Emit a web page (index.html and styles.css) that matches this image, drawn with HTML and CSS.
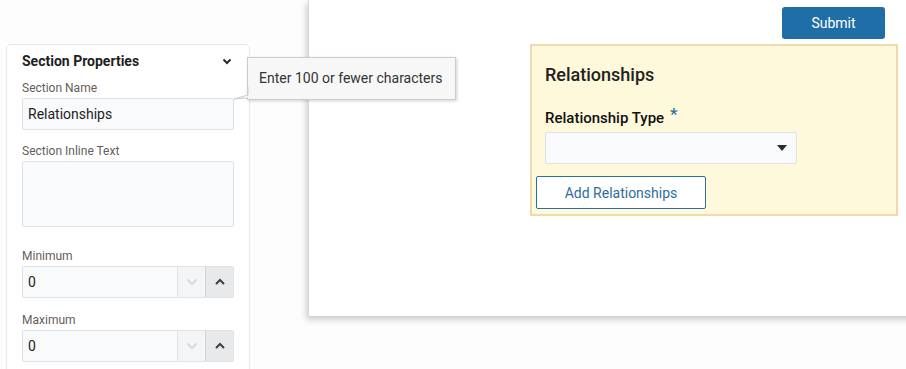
FILE: index.html
```html
<!DOCTYPE html>
<html lang="en">
<head>
  <meta charset="UTF-8">
  <title>Form Builder</title>
  <link rel="stylesheet" href="styles.css">
</head>
<body>
  <aside class="props">
    <div class="props-head">
      <span>Section Properties</span>
      <svg class="chev" width="10" height="7" viewBox="0 0 10 7"><path d="M1.5 1.5 L5 5 L8.5 1.5" fill="none" stroke="#2b2b2b" stroke-width="2"/></svg>
    </div>

    <div class="field">
      <label>Section Name</label>
      <div class="box">Relationships</div>
    </div>

    <div class="field">
      <label>Section Inline Text</label>
      <div class="box area"></div>
    </div>

    <div class="field wide">
      <label>Minimum</label>
      <div class="box spin">
        <span class="val">0</span>
        <span class="btn down"><svg width="12" height="8" viewBox="0 0 12 8"><path d="M1.5 1.5 L6 6 L10.5 1.5" fill="none" stroke="#d0d3d6" stroke-width="1.6"/></svg></span>
        <span class="btn up"><svg width="12" height="8" viewBox="0 0 12 8"><path d="M2 6 L6 2 L10 6" fill="none" stroke="#3a3f44" stroke-width="2"/></svg></span>
      </div>
    </div>

    <div class="field last">
      <label>Maximum</label>
      <div class="box spin">
        <span class="val">0</span>
        <span class="btn down"><svg width="12" height="8" viewBox="0 0 12 8"><path d="M1.5 1.5 L6 6 L10.5 1.5" fill="none" stroke="#d0d3d6" stroke-width="1.6"/></svg></span>
        <span class="btn up"><svg width="12" height="8" viewBox="0 0 12 8"><path d="M2 6 L6 2 L10 6" fill="none" stroke="#3a3f44" stroke-width="2"/></svg></span>
      </div>
    </div>
  </aside>

  <div class="tip">
    Enter 100 or fewer characters
    <svg class="tip-arrow" width="16" height="13" viewBox="0 0 16 13"><path d="M15 0 L15 8 L1 12 L15 11" fill="#f7f7f7" stroke="#c9ccd0" stroke-width="1"/></svg>
  </div>

  <main class="canvas">
    <div class="form">
      <button class="submit">Submit</button>
      <section class="rel">
        <h2>Relationships</h2>
        <div class="rel-label">Relationship Type <span class="req">*</span></div>
        <div class="select">
          <svg width="10" height="6" viewBox="0 0 10 6"><path d="M0 0 L10 0 L5 6 Z" fill="#2b2b2b"/></svg>
        </div>
        <button class="add">Add Relationships</button>
      </section>
    </div>
  </main>
</body>
</html>
```
FILE: styles.css
```css
* {
  box-sizing: border-box;
}

body {
  margin: 0;
  height: 100vh;
  overflow: hidden;
  display: flex;
  align-items: flex-start;
  background: #fdfdfd;
  font-family: Roboto, "Liberation Sans", sans-serif;
  color: #222;
  position: relative;
}

/* left properties panel */
.props {
  flex: none;
  width: 244px;
  height: 340px;
  margin: 44px 0 0 6px;
  padding: 6px 15px 0 15px;
  background: #fff;
  border: 1px solid #e6e7e9;
  border-radius: 5px;
}
.props-head {
  display: flex;
  justify-content: space-between;
  align-items: center;
  font-size: 14px;
  line-height: 20px;
  font-weight: bold;
  color: #1e1e1e;
}
.chev {
  margin-right: 2px;
  margin-top: 1px;
}

.field {
  margin-top: 13px;
}
.props-head + .field {
  margin-top: 9px;
}
.field.wide {
  margin-top: 21px;
}
.field.last {
  margin-top: 14px;
}
.field label {
  display: block;
  font-size: 12px;
  line-height: 16px;
  color: #645e5b;
  margin-bottom: 2px;
}
.box {
  height: 32px;
  background: #f9fafc;
  border: 1px solid #dfe2e6;
  border-radius: 2px;
  font-size: 14px;
  line-height: 30px;
  padding-left: 5px;
  color: #222;
}
.box.area {
  height: 66px;
}
.box.spin {
  display: flex;
  padding-left: 0;
}
.spin .val {
  flex: 1;
  padding-left: 5px;
}
.spin .btn {
  width: 28px;
  display: flex;
  align-items: center;
  justify-content: center;
  border-left: 1px solid #e2e4e7;
}
.spin .down {
  background: #f4f5f6;
}
.spin .up {
  background: #e7e9eb;
  border-left-color: #cfd3d8;
}

/* tooltip over the name field */
.tip {
  position: absolute;
  left: 247px;
  top: 57px;
  width: 209px;
  height: 43px;
  padding-left: 11px;
  background: #f7f7f7;
  border: 1px solid #c9ccd0;
  box-shadow: 1px 1px 3px rgba(0, 0, 0, 0.18);
  font-size: 14px;
  line-height: 40px;
  color: #333;
  z-index: 2;
}
.tip-arrow {
  position: absolute;
  left: -15px;
  top: 29px;
}

/* main canvas */
.canvas {
  flex: 1;
  height: 317px;
  margin: 0 -30px 0 58px;
  background: #fff;
  border-left: 1px solid #d5dae0;
  border-bottom: 1px solid #cfd5dc;
  box-shadow: -2px 3px 6px rgba(0, 0, 0, 0.18);
}
.form {
  width: 368px;
  margin-left: 221px;
  padding-top: 7px;
  display: flex;
  flex-direction: column;
}
.submit {
  align-self: flex-end;
  margin-right: 13px;
  width: 103px;
  height: 32px;
  border: none;
  border-radius: 3px;
  background: #1f6ea8;
  color: #fff;
  font-family: inherit;
  font-size: 14px;
}

.rel {
  margin-top: 5px;
  height: 172px;
  padding: 17px 13px 0 13px;
  background: #fef9da;
  border: 2px solid #f0d9aa;
}
.rel h2 {
  margin: 0;
  font-size: 18px;
  line-height: 24px;
  font-weight: 500;
  color: #222;
}
.rel-label {
  margin-top: 20px;
  font-size: 15px;
  line-height: 20px;
  font-weight: 500;
  color: #111;
}
.req {
  color: #2a6eaa;
  font-size: 17px;
  position: relative;
  top: -3px;
  margin-left: 2px;
}
.select {
  margin-top: 4px;
  width: 252px;
  height: 32px;
  background: #f9fafc;
  border: 1px solid #dde1e5;
  border-radius: 2px;
  display: flex;
  align-items: center;
  justify-content: flex-end;
  padding-right: 9px;
}
.add {
  display: block;
  margin: 12px 0 0 -9px;
  width: 170px;
  height: 33px;
  background: #fff;
  border: 1px solid #2a6ea6;
  border-radius: 2px;
  color: #2f6c9e;
  font-family: inherit;
  font-size: 14px;
}
```
